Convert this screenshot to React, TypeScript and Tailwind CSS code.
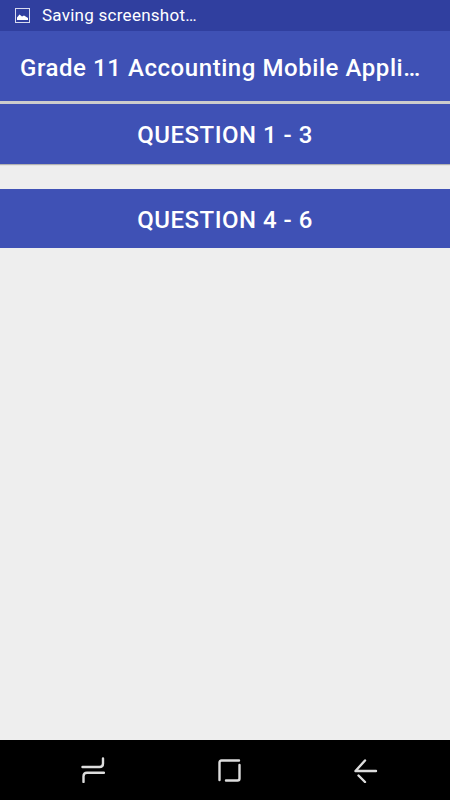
export default function App() {
  return (
    <div className="flex h-[800px] w-[450px] flex-col overflow-hidden bg-[#eeeeee] font-['Roboto',sans-serif] text-white">
      {/* status bar */}
      <div className="flex h-[31px] shrink-0 items-center bg-[#303f9f] pl-[15px]">
        <svg width="15" height="15" viewBox="0 0 15 15" className="shrink-0">
          <rect x="0.5" y="0.5" width="14" height="14" fill="none" stroke="#d8dbef" strokeWidth="1" />
          <path d="M2 12 V9.5 L4.5 6.5 L7 8.5 L9 7.5 L13 10 V12 Z" fill="#ffffff" />
        </svg>
        <span className="ml-[12px] text-[17px] leading-none tracking-[0.26px]">Saving screenshot…</span>
      </div>

      {/* toolbar */}
      <div className="flex h-[70px] shrink-0 items-center bg-[#3f51b5] pl-[20px] pt-[4px]">
        <h1 className="whitespace-nowrap text-[24px] font-medium leading-none tracking-[0.56px]">
          Grade 11 Accounting Mobile Appli…
        </h1>
      </div>
      <div className="h-[3px] shrink-0 bg-[#cccccc]" />

      {/* question buttons */}
      <button className="flex h-[60px] shrink-0 items-center justify-center bg-[#3f51b5] pt-[2px] text-[24px] font-medium leading-none tracking-[0.5px] shadow-[0_1px_1px_rgba(0,0,0,0.25)]">
        QUESTION 1 - 3
      </button>
      <button className="mt-[25px] flex h-[59px] shrink-0 items-center justify-center bg-[#3f51b5] pt-[2px] text-[24px] font-medium leading-none tracking-[0.5px]">
        QUESTION 4 - 6
      </button>

      <div className="flex-1" />

      {/* nav bar */}
      <div className="flex h-[60px] shrink-0 items-center bg-black pl-[81px]">
        <svg width="24" height="26" viewBox="0 0 24 26" fill="none" stroke="#dddddd" strokeWidth="2.4" strokeLinecap="round" strokeLinejoin="round">
          <path d="M1.5 10 H18.5 Q22 10 22 6.5 V1.5" />
          <path d="M23 15.7 H6 Q2.5 15.7 2.5 19.2 V25" />
        </svg>
        <svg className="ml-[113px]" width="24" height="24" viewBox="0 0 24 24" fill="none" stroke="#dddddd" strokeWidth="2.4" strokeLinecap="round" strokeLinejoin="round">
          <path d="M21 2.5 H3.5 Q1.5 2.5 1.5 4.5 V22" />
          <path d="M21.5 7 V20.5 Q21.5 22.5 19.5 22.5 H8" />
        </svg>
        <svg className="ml-[112px]" width="24" height="26" viewBox="0 0 24 26" fill="none" stroke="#dddddd" strokeWidth="2.4" strokeLinecap="round" strokeLinejoin="round">
          <path d="M11 3.5 L1.5 14 H22" />
          <path d="M4.5 18.5 L11 25" />
        </svg>
      </div>
    </div>
  )
}
